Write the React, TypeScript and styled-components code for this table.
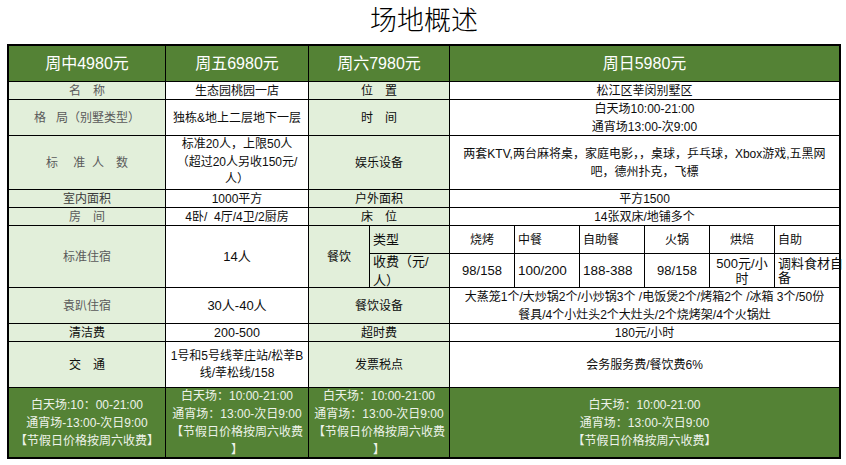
import styled, { createGlobalStyle } from 'styled-components';
import type { ReactNode } from 'react';

const GlobalStyle = createGlobalStyle`
  html, body {
    margin: 0;
    padding: 0;
    background: #fff;
  }
  body {
    font-family: "Liberation Sans", "Noto Sans CJK SC", sans-serif;
  }
`;

type Kind = 'head' | 'label' | 'value' | 'foot';
type Tone = 'ink' | 'muted' | 'dim';

const colors = {
  green: '#548235',
  pale: '#e2efda',
  line: '#000',
  footText: '#eef3ea',
  ink: '#0d0d0d',
  muted: '#5a5a5a',
  dim: '#3c3c3c',
};

const backgrounds: Record<Kind, string> = {
  head: colors.green,
  foot: colors.green,
  label: colors.pale,
  value: '#fff',
};

const Page = styled.div`
  width: 846px;
  height: 465px;
  padding: 0 5px 0 7px;
  box-sizing: border-box;
`;

const Title = styled.h1`
  margin: 0;
  height: 44px;
  font-family: "Noto Sans CJK SC", serif;
  font-weight: 300;
  font-size: 27px;
  line-height: 37px;
  text-align: center;
  color: #000;
`;

const Sheet = styled.div`
  display: grid;
  grid-template-columns: 156px 142px 60px 79px repeat(6, 64px);
  grid-template-rows: 35px 17px 35px 53px 17px 17px 27px 33px 35px 17px 45px 69px;
  gap: 1px;
  width: 834px;
  box-sizing: border-box;
  background: ${colors.line};
  border: 2px solid ${colors.line};
`;

const Box = styled.div<{
  $kind: Kind;
  $cs: number;
  $rs: number;
  $left: boolean;
  $tone: Tone;
  $size: number;
  $lh: number;
}>`
  grid-column: span ${p => p.$cs};
  grid-row: span ${p => p.$rs};
  display: flex;
  align-items: center;
  justify-content: ${p => (p.$left ? 'flex-start' : 'center')};
  padding-left: ${p => (p.$left ? '3px' : '0')};
  background: ${p => backgrounds[p.$kind]};
  color: ${p =>
    p.$kind === 'head' ? '#fff' : p.$kind === 'foot' ? colors.footText : colors[p.$tone]};
  font-size: ${p => p.$size}px;
  line-height: ${p => p.$lh}px;
  white-space: pre;
  overflow: visible;
`;

const Text = styled.span<{ $left: boolean }>`
  display: block;
  text-align: ${p => (p.$left ? 'left' : 'center')};
`;

interface CellProps {
  kind?: Kind;
  cs?: number;
  rs?: number;
  left?: boolean;
  tone?: Tone;
  size?: number;
  lh?: number;
  children: ReactNode;
}

const Cell = ({
  kind = 'value',
  cs = 1,
  rs = 1,
  left = false,
  tone = 'ink',
  size,
  lh,
  children,
}: CellProps) => (
  <Box
    $kind={kind}
    $cs={cs}
    $rs={rs}
    $left={left}
    $tone={tone}
    $size={size ?? (kind === 'head' ? 16 : 12)}
    $lh={lh ?? 18}
  >
    <Text $left={left}>{children}</Text>
  </Box>
);

export default function App() {
  return (
    <Page>
      <GlobalStyle />
      <Title>场地概述</Title>
      <Sheet>
        <Cell kind="head">周中4980元</Cell>
        <Cell kind="head">周五6980元</Cell>
        <Cell kind="head" cs={2}>周六7980元</Cell>
        <Cell kind="head" cs={6}>周日5980元</Cell>

        <Cell kind="label" tone="muted">{'名\u3000称'}</Cell>
        <Cell>生态园桃园一店</Cell>
        <Cell kind="label" cs={2}>{'位\u3000置'}</Cell>
        <Cell cs={6}>松江区莘闵别墅区</Cell>

        <Cell kind="label" tone="muted">{'格   局（别墅类型）'}</Cell>
        <Cell>独栋&amp;地上二层地下一层</Cell>
        <Cell kind="label" cs={2}>{'时\u3000间'}</Cell>
        <Cell cs={6}>
          白天场10:00-21:00
          <br />
          通宵场13:00-次9:00
        </Cell>

        <Cell kind="label" tone="muted">{'标\u3000 准  人\u3000数'}</Cell>
        <Cell lh={17.5}>
          标准20人，上限50人
          <br />
          （超过20人另收150元/
          <br />
          人）
        </Cell>
        <Cell kind="label" cs={2}>娱乐设备</Cell>
        <Cell cs={6}>
          两套KTV,两台麻将桌，家庭电影，，桌球，乒乓球，Xbox游戏,五黑网
          <br />
          吧，德州扑克，飞標
        </Cell>

        <Cell kind="label" tone="dim">室内面积</Cell>
        <Cell>1000平方</Cell>
        <Cell kind="label" cs={2}>户外面积</Cell>
        <Cell cs={6}>平方1500</Cell>

        <Cell kind="label" tone="muted">{'房\u3000间'}</Cell>
        <Cell>{'4卧/  4厅/4卫/2厨房'}</Cell>
        <Cell kind="label" cs={2}>{'床\u3000位'}</Cell>
        <Cell cs={6}>14张双床/地铺多个</Cell>

        <Cell kind="label" tone="muted" rs={2}>标准住宿</Cell>
        <Cell rs={2} size={13}>14人</Cell>
        <Cell kind="label" rs={2}>餐饮</Cell>
        <Cell kind="label" left size={13}>类型</Cell>
        <Cell>烧烤</Cell>
        <Cell left>中餐</Cell>
        <Cell left>自助餐</Cell>
        <Cell>火锅</Cell>
        <Cell>烘焙</Cell>
        <Cell left>自助</Cell>

        <Cell kind="label" left size={13} lh={19}>
          收费（元/
          <br />
          人）
        </Cell>
        <Cell size={13}>98/158</Cell>
        <Cell left size={13.5}>100/200</Cell>
        <Cell left size={13.5}>188-388</Cell>
        <Cell size={13}>98/158</Cell>
        <Cell size={13} lh={15}>
          500元/小
          <br />
          时
        </Cell>
        <Cell left size={13} lh={14}>
          调料食材自
          <br />
          备
        </Cell>

        <Cell kind="label" tone="muted">袁趴住宿</Cell>
        <Cell size={13}>30人-40人</Cell>
        <Cell kind="label" cs={2}>餐饮设备</Cell>
        <Cell cs={6}>
          大蒸笼1个/大炒锅2个/小炒锅3个 /电饭煲2个/烤箱2个 /冰箱 3个/50份
          <br />
          餐具/4个小灶头2个大灶头/2个烧烤架/4个火锅灶
        </Cell>

        <Cell kind="label">清洁费</Cell>
        <Cell size={12.5}>200-500</Cell>
        <Cell kind="label" cs={2}>超时费</Cell>
        <Cell cs={6}>180元/小时</Cell>

        <Cell kind="label">{'交\u3000通'}</Cell>
        <Cell lh={17}>
          1号和5号线莘庄站/松莘B
          <br />
          线/莘松线/158
        </Cell>
        <Cell kind="label" cs={2}>发票税点</Cell>
        <Cell cs={6}>会务服务费/餐饮费6%</Cell>

        <Cell kind="foot">
          白天场:10：00-21:00
          <br />
          通宵场-13:00-次日9:00
          <br />
          【节假日价格按周六收费】
        </Cell>
        <Cell kind="foot">
          白天场：10:00-21:00
          <br />
          通宵场：13:00-次日9:00
          <br />
          【节假日价格按周六收费
          <br />】
        </Cell>
        <Cell kind="foot" cs={2}>
          白天场：10:00-21:00
          <br />
          通宵场：13:00-次日9:00
          <br />
          【节假日价格按周六收费
          <br />】
        </Cell>
        <Cell kind="foot" cs={6}>
          白天场：10:00-21:00
          <br />
          通宵场：13:00-次日9:00
          <br />
          【节假日价格按周六收费】
        </Cell>
      </Sheet>
    </Page>
  );
}
